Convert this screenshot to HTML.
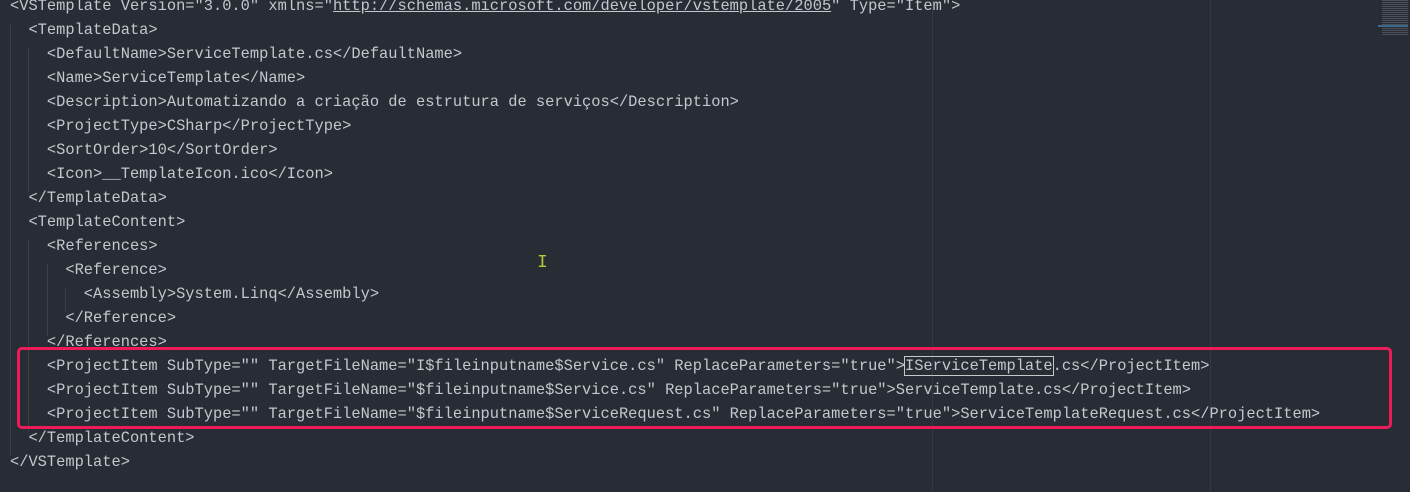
<!DOCTYPE html>
<html><head><meta charset="utf-8"><style>
html,body{margin:0;padding:0;background:#282c34;width:1410px;height:492px;overflow:hidden}
body{position:relative;font-family:"Liberation Mono",monospace;font-size:15.38px;color:#c3c7ce}
.l{position:absolute;left:10px;white-space:pre;line-height:24px;height:24px}
.g{position:absolute;width:1px;background:#3a3f48}
.u{text-decoration:underline}
</style></head><body>
<div class="g" style="left:932px;top:0;height:492px;background:#333841"></div>
<div class="g" style="left:1210px;top:0;height:492px;background:#333841"></div>
<div class="g" style="left:10px;top:24px;height:432px"></div>
<div class="g" style="left:28px;top:48px;height:144px"></div>
<div class="g" style="left:28px;top:240px;height:192px"></div>
<div class="g" style="left:47px;top:264px;height:72px"></div>
<div class="g" style="left:65px;top:288px;height:24px"></div>
<div class="l" style="top:-6px">&lt;VSTemplate Version="3.0.0" xmlns="<span class="u">http://schemas.microsoft.com/developer/vstemplate/2005</span>" Type="Item"&gt;</div>
<div class="l" style="top:18px">  &lt;TemplateData&gt;</div>
<div class="l" style="top:42px">    &lt;DefaultName&gt;ServiceTemplate.cs&lt;/DefaultName&gt;</div>
<div class="l" style="top:66px">    &lt;Name&gt;ServiceTemplate&lt;/Name&gt;</div>
<div class="l" style="top:90px">    &lt;Description&gt;Automatizando a criação de estrutura de serviços&lt;/Description&gt;</div>
<div class="l" style="top:114px">    &lt;ProjectType&gt;CSharp&lt;/ProjectType&gt;</div>
<div class="l" style="top:138px">    &lt;SortOrder&gt;10&lt;/SortOrder&gt;</div>
<div class="l" style="top:162px">    &lt;Icon&gt;__TemplateIcon.ico&lt;/Icon&gt;</div>
<div class="l" style="top:186px">  &lt;/TemplateData&gt;</div>
<div class="l" style="top:210px">  &lt;TemplateContent&gt;</div>
<div class="l" style="top:234px">    &lt;References&gt;</div>
<div class="l" style="top:258px">      &lt;Reference&gt;</div>
<div class="l" style="top:282px">        &lt;Assembly&gt;System.Linq&lt;/Assembly&gt;</div>
<div class="l" style="top:306px">      &lt;/Reference&gt;</div>
<div class="l" style="top:330px">    &lt;/References&gt;</div>
<div class="l" style="top:354px">    &lt;ProjectItem SubType="" TargetFileName="I$fileinputname$Service.cs" ReplaceParameters="true"&gt;<span style="outline:1px solid #c8c8c8;outline-offset:0">IServiceTemplate</span>.cs&lt;/ProjectItem&gt;</div>
<div class="l" style="top:378px">    &lt;ProjectItem SubType="" TargetFileName="$fileinputname$Service.cs" ReplaceParameters="true"&gt;ServiceTemplate.cs&lt;/ProjectItem&gt;</div>
<div class="l" style="top:402px">    &lt;ProjectItem SubType="" TargetFileName="$fileinputname$ServiceRequest.cs" ReplaceParameters="true"&gt;ServiceTemplateRequest.cs&lt;/ProjectItem&gt;</div>
<div class="l" style="top:426px">  &lt;/TemplateContent&gt;</div>
<div class="l" style="top:450px">&lt;/VSTemplate&gt;</div>
<div style="position:absolute;left:17px;top:347px;width:1369px;height:76px;border:3px solid #ec1c5a;border-radius:5px"></div>
<div style="position:absolute;left:537px;top:254px;color:#b5c83a;font-size:18px;line-height:18px">I</div>
<div style="position:absolute;left:1382px;top:0;width:26px;height:36px;background:repeating-linear-gradient(#5a5f68 0 1px,transparent 1px 2px);opacity:.7"></div>
<div style="position:absolute;left:1378px;top:25px;width:30px;height:2px;background:#3d6a8a"></div>
</body></html>
